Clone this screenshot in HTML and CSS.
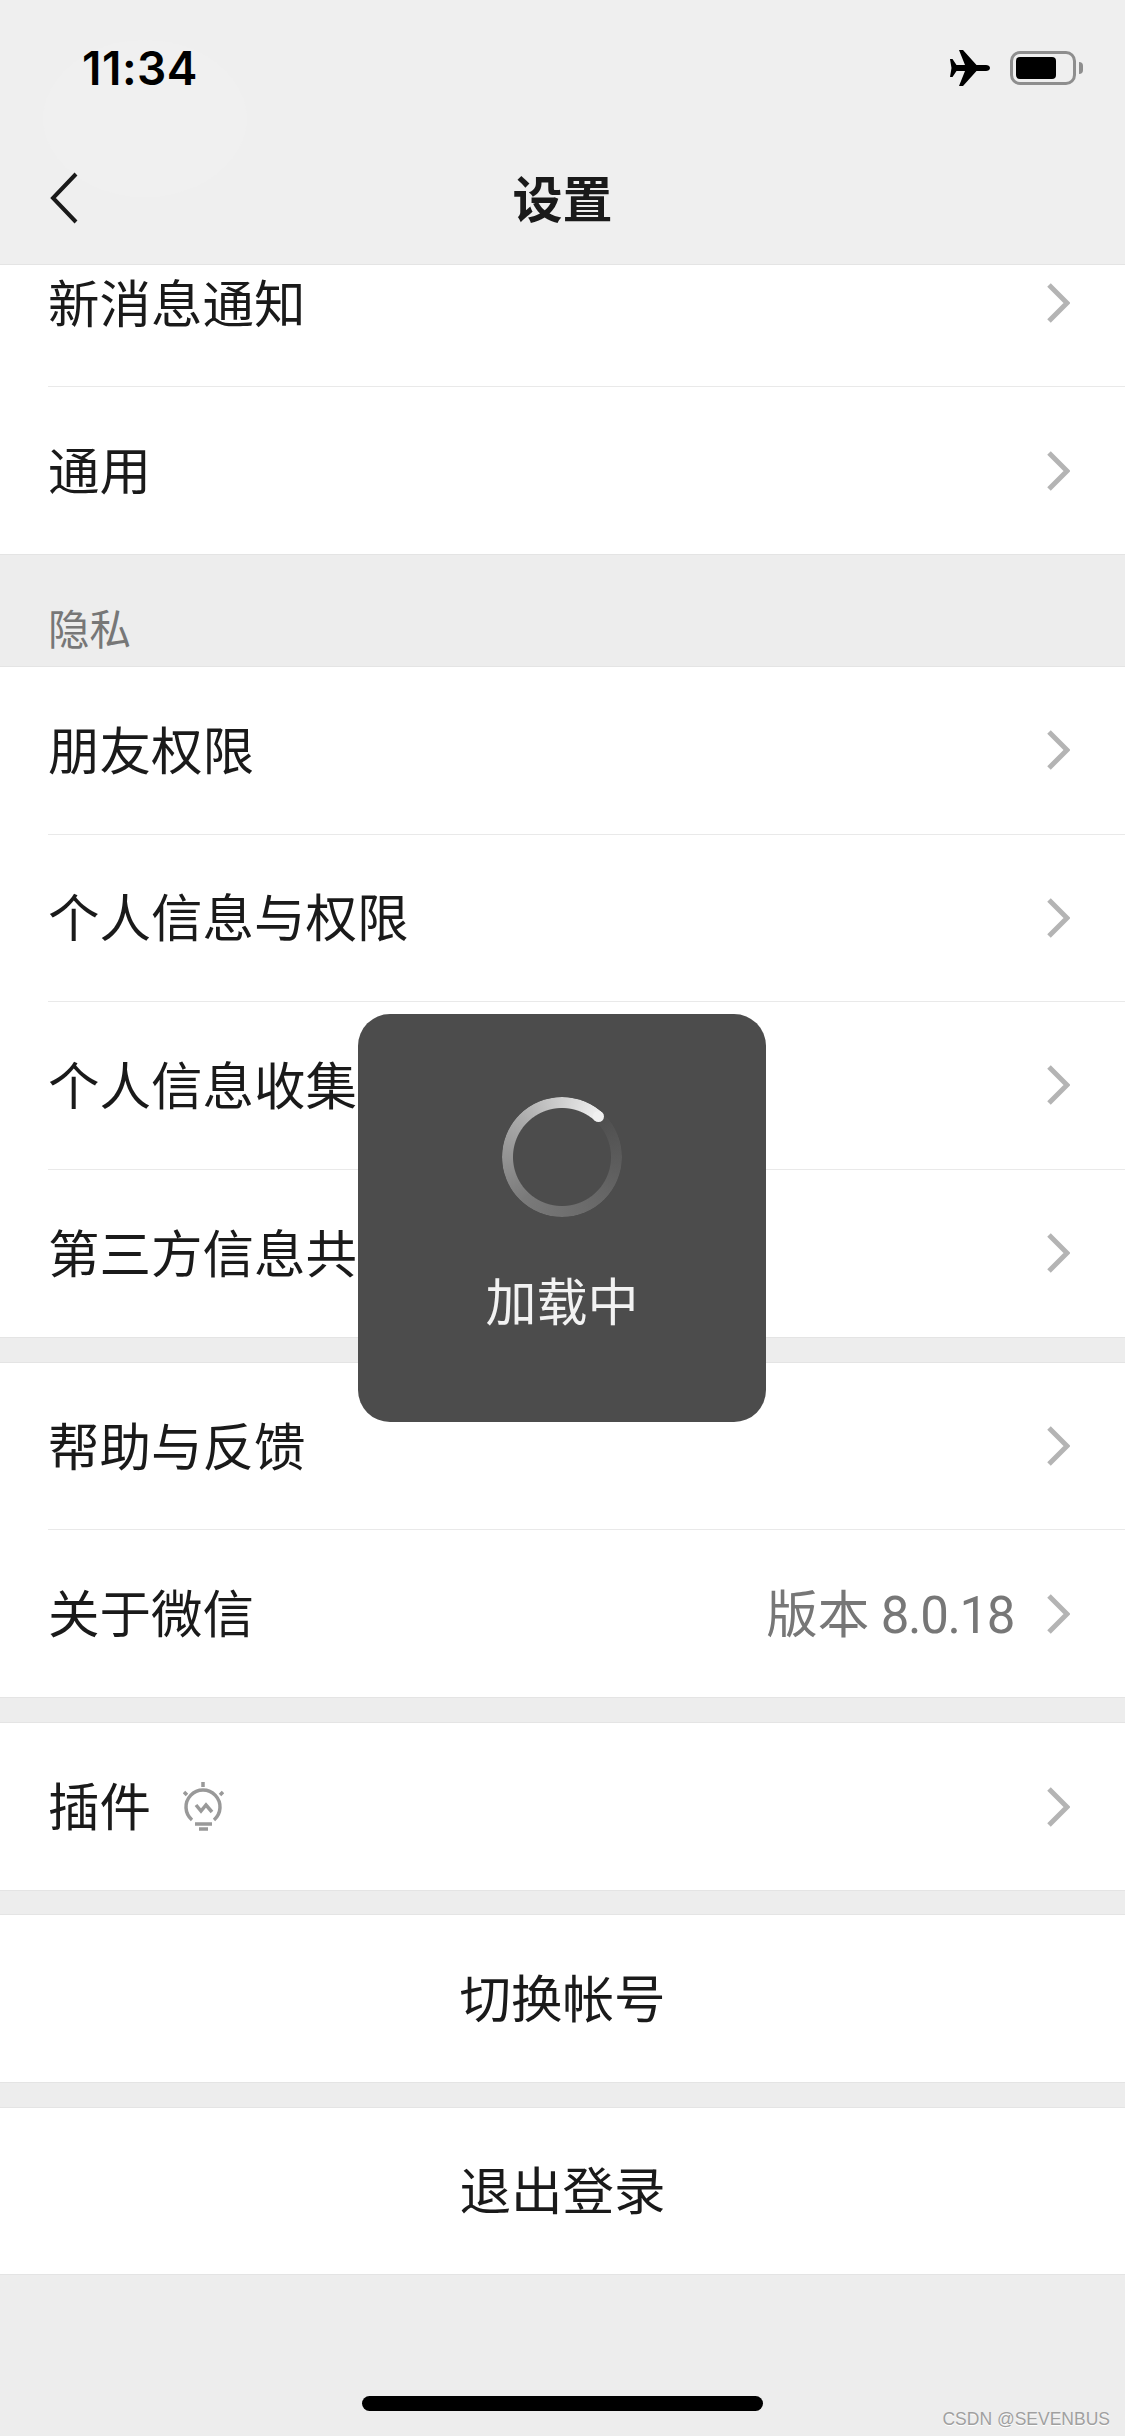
FILE: index.html
```html
<!DOCTYPE html>
<html lang="zh-CN">
<head>
<meta charset="UTF-8">
<meta name="viewport" content="width=device-width, initial-scale=1.0">
<title>设置</title>
<link rel="stylesheet" href="styles.css">
</head>
<body>
<div class="page">
  <header class="header">
    <div class="status-bar">
      <span class="time">11:34</span>
      <div class="status-icons">
        <svg class="plane" viewBox="0 0 40 36"><path d="M40 18c0-2-2-3-4-3H26.500L13 0H9l6 15H6.500L2.500 9H0l1.500 9L0 27h2.500l4-6H15L9 36h4l13.500-15H36c2 0 4-1 4-3z"/></svg>
        <div class="battery"><div class="battery-fill"></div></div>
        <div class="battery-nub"></div>
      </div>
    </div>
    <div class="nav-bar">
      <svg class="back" viewBox="0 0 28 52"><path d="M26 2 3 26l23 24"/></svg>
      <h1 class="title">设置</h1>
    </div>
  </header>

  <main class="scroll">
    <div class="group">
      <div class="row"><span class="label">新消息通知</span><svg class="chevron" viewBox="0 0 24 40"><path d="M3 2l18 18L3 38"/></svg></div>
      <div class="row"><span class="label">通用</span><svg class="chevron" viewBox="0 0 24 40"><path d="M3 2l18 18L3 38"/></svg></div>
    </div>

    <div class="section-title">隐私</div>

    <div class="group group-tall">
      <div class="row"><span class="label">朋友权限</span><svg class="chevron" viewBox="0 0 24 40"><path d="M3 2l18 18L3 38"/></svg></div>
      <div class="row"><span class="label">个人信息与权限</span><svg class="chevron" viewBox="0 0 24 40"><path d="M3 2l18 18L3 38"/></svg></div>
      <div class="row"><span class="label">个人信息收集清单</span><svg class="chevron" viewBox="0 0 24 40"><path d="M3 2l18 18L3 38"/></svg></div>
      <div class="row"><span class="label">第三方信息共享清单</span><svg class="chevron" viewBox="0 0 24 40"><path d="M3 2l18 18L3 38"/></svg></div>
    </div>

    <div class="group gap">
      <div class="row"><span class="label">帮助与反馈</span><svg class="chevron" viewBox="0 0 24 40"><path d="M3 2l18 18L3 38"/></svg></div>
      <div class="row"><span class="label">关于微信</span><span class="value">版本 <span class="value-num">8.0.18</span></span><svg class="chevron" viewBox="0 0 24 40"><path d="M3 2l18 18L3 38"/></svg></div>
    </div>

    <div class="group gap">
      <div class="row">
        <span class="label-short">插件</span>
        <svg class="bulb" viewBox="0 0 41 50">
          <path d="M9 38A17 17 0 1 1 31 38"/>
          <path d="M20 0v5M1 10l3 3M40 10l-3 3"/>
          <path d="M13 23l5 6 5-6 6 7"/>
          <path d="M12 42h17M16 47h9"/>
        </svg>
        <svg class="chevron chevron-end" viewBox="0 0 24 40"><path d="M3 2l18 18L3 38"/></svg>
      </div>
    </div>

    <div class="group gap-small"><div class="row row-center">切换帐号</div></div>
    <div class="group gap"><div class="row row-center">退出登录</div></div>
  </main>

  <div class="toast">
    <div class="spinner"><div class="spinner-ring"></div><div class="spinner-head"></div></div>
    <div class="toast-text">加载中</div>
  </div>

  <div class="home-bar"></div>
  <div class="watermark">CSDN @SEVENBUS</div>
</div>
</body>
</html>
```

FILE: styles.css
```css
body {
  margin: 0;
  padding: 0;
  background-color: #ededed;
  font-family: "Noto Sans CJK SC", "Noto Sans", sans-serif;
}

.page {
  width: 1125px;
  height: 2436px;
  position: relative;
  overflow: hidden;
}

/* header sits on top of the scrolled list */
.header {
  position: relative;
  z-index: 2;
  height: 265px;
  box-sizing: border-box;
  background-color: #efefef;
  border-bottom: 1px solid #e4e4e4;
}

/* faint lighter blob behind the clock */
.header::before {
  content: "";
  position: absolute;
  left: 43px;
  top: 40px;
  width: 204px;
  height: 157px;
  border-radius: 50%;
  background-color: #f0f0f0;
}

.status-bar {
  height: 135px;
  box-sizing: border-box;
  padding: 0 42px 0 82px;
  display: flex;
  justify-content: space-between;
  align-items: center;
  position: relative;
}

.time {
  font-family: Inter, sans-serif;
  font-weight: 600;
  font-size: 46px;
  letter-spacing: 0.5px;
  color: #000;
}

.status-icons {
  display: flex;
  align-items: center;
}

.plane {
  width: 40px;
  height: 36px;
  margin-right: 20px;
}

.battery {
  width: 66px;
  height: 34px;
  box-sizing: border-box;
  border: 3px solid #8e8e8e;
  border-radius: 10px;
  padding: 3px;
}

.battery-fill {
  width: 40px;
  height: 22px;
  background-color: #000;
  border-radius: 4px;
}

.battery-nub {
  width: 4px;
  height: 12px;
  margin-left: 3px;
  background-color: #8e8e8e;
  border-radius: 0 6px 6px 0;
}

.nav-bar {
  height: 129px;
  position: relative;
  display: flex;
  align-items: center;
  justify-content: center;
}

.back {
  position: absolute;
  left: 50px;
  top: 37px;
  width: 28px;
  height: 52px;
  fill: none;
  stroke: #1a1a1a;
  stroke-width: 4;
}

.title {
  margin: 0 0 8px;
  font-size: 50px;
  font-weight: 700;
  color: #1a1a1a;
}

.scroll {
  margin-top: -45px;
}

.group {
  background-color: #fff;
  box-shadow: 0 0 0 1px #e4e4e4;
}

.gap {
  margin-top: 26px;
}

.gap-small {
  margin-top: 25px;
}

.row {
  height: 167px;
  box-sizing: border-box;
  margin-left: 48px;
  padding-right: 55px;
  border-bottom: 1px solid #e9e9e9;
  display: flex;
  align-items: center;
  font-size: 51.500px;
  color: #1a1a1a;
}

.group-tall .row {
  height: 167.5px;
}

.row:last-child {
  border-bottom: none;
}

.row-center {
  height: 166.5px;
  margin-left: 0;
  padding: 0 0 6px;
  justify-content: center;
}

.label {
  flex: 1;
  margin-bottom: 6px;
}

.label-short {
  margin-bottom: 6px;
}

.value {
  color: #777;
  margin-right: 32px;
  margin-bottom: 6px;
}

.value-num {
  font-family: Roboto, sans-serif;
  font-size: 51px;
  letter-spacing: -1.4px;
}

.chevron {
  width: 24px;
  height: 40px;
  fill: none;
  stroke: #b4b4b4;
  stroke-width: 5;
}

.chevron-end {
  margin-left: auto;
}

.bulb {
  margin-left: 32px;
  width: 41px;
  height: 50px;
  fill: none;
  stroke: #999;
  stroke-width: 3.500;
}

.section-title {
  height: 113px;
  box-sizing: border-box;
  padding: 43px 0 0 48px;
  font-size: 41.500px;
  line-height: 60px;
  color: #777;
}

.toast {
  position: absolute;
  left: 358px;
  top: 1014px;
  width: 408px;
  height: 408px;
  z-index: 3;
  background-color: #4c4c4c;
  border-radius: 32px;
  display: flex;
  flex-direction: column;
  align-items: center;
  padding-top: 83px;
  box-sizing: border-box;
}

.spinner {
  width: 120px;
  height: 120px;
  position: relative;
}

.spinner-ring {
  width: 100%;
  height: 100%;
  border-radius: 50%;
  background: conic-gradient(from 42deg, #4e4e4e, #666 25%, #7a7a7a 50%, #aaa 75%, #f0f0f0);
  -webkit-mask: radial-gradient(circle, transparent 48.500px, #000 49.500px);
  mask: radial-gradient(circle, transparent 48.500px, #000 49.500px);
}

.spinner-head {
  position: absolute;
  left: 91px;
  top: 14px;
  width: 11px;
  height: 11px;
  border-radius: 50%;
  background-color: #f0f0f0;
}

.toast-text {
  margin-top: 46px;
  font-size: 51px;
  line-height: 72px;
  color: #f2f2f2;
}

.home-bar {
  position: absolute;
  left: 362px;
  top: 2396px;
  width: 401px;
  height: 15px;
  background-color: #000;
  border-radius: 8px;
}

.watermark {
  position: absolute;
  right: 15px;
  top: 2409px;
  font-family: "Liberation Sans", sans-serif;
  font-size: 17.500px;
  line-height: 21px;
  color: #a0a0a0;
  text-shadow: 0 1px 0 #fff;
}
```
